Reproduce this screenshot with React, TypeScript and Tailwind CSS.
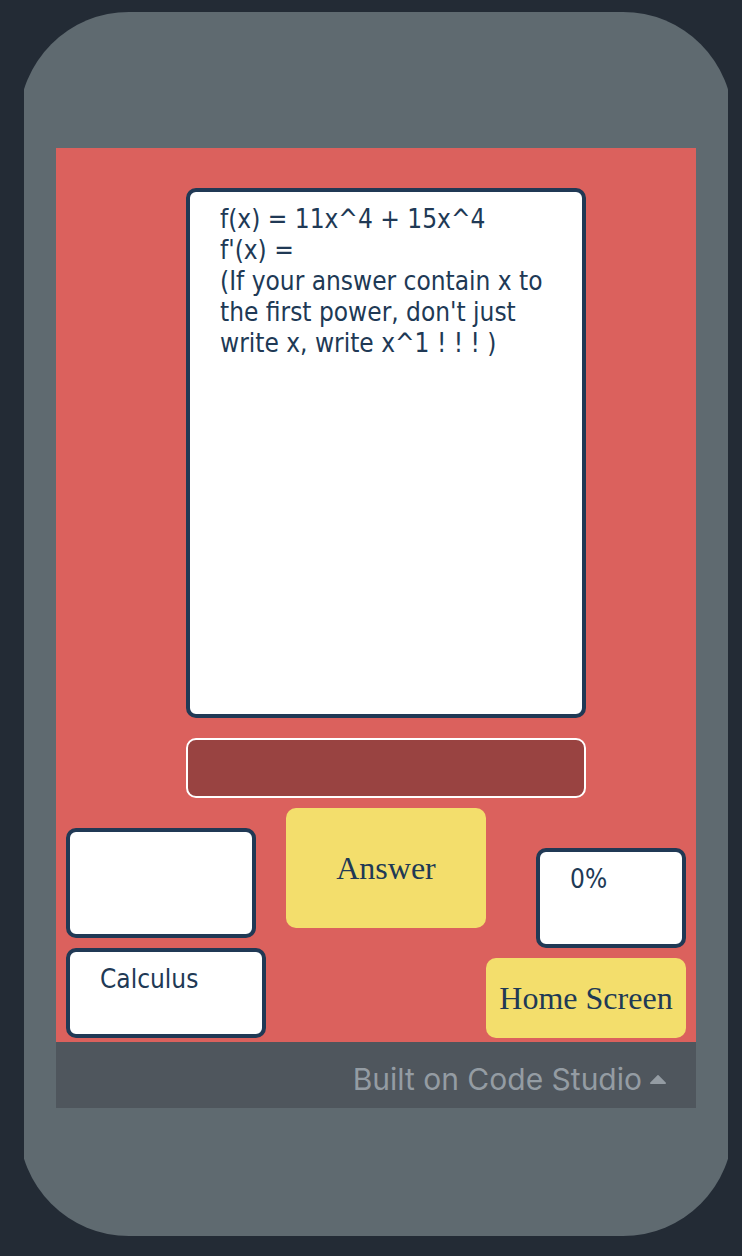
import { useState, type ReactNode } from "react";

function Panel({ className, children }: { className: string; children?: ReactNode }) {
  return (
    <div
      className={`rounded-[10px] border-4 border-[#203955] bg-white px-[30px] py-3 font-['DejaVu_Sans_Condensed','DejaVu_Sans',sans-serif] text-[26px] leading-[31px] text-[#203955] ${className}`}
    >
      {children}
    </div>
  );
}

function GameButton({ className, children }: { className: string; children: ReactNode }) {
  return (
    <button
      type="button"
      className={`w-full rounded-[10px] bg-[#f3de6c] font-['Liberation_Serif',serif] text-[32px] leading-9 whitespace-nowrap text-[#203955] ${className}`}
    >
      {children}
    </button>
  );
}

export default function App() {
  const [answer, setAnswer] = useState("");

  return (
    <div className="min-h-screen bg-[#232b35] pt-3 pr-[14px] pb-5 pl-6">
      <main className="mx-auto max-w-[704px] overflow-hidden">
        <div className="-mx-[5px] rounded-[110px] bg-[#5f6a70] px-[37px] pt-[136px] pb-32">
          <section className="bg-[#db615d] pt-10 pb-1">
            <Panel className="mr-[110px] ml-[130px] min-h-[530px]">
              <p>f(x) = 11x^4 + 15x^4</p>
              <p>f&apos;(x) =</p>
              <p>(If your answer contain x to the first power, don&apos;t just write x, write x^1 ! ! ! )</p>
            </Panel>
            <div className="mt-5 mr-[110px] ml-[130px]">
              <input
                type="text"
                aria-label="Your answer"
                value={answer}
                onChange={(event) => setAnswer(event.target.value)}
                className="block h-[60px] w-full rounded-[10px] border-2 border-white bg-[#994341] px-4 text-[26px] text-white outline-none"
              />
            </div>
            <div className="flex items-start px-[10px]">
              <div className="mr-auto flex w-[200px] flex-col gap-[10px] pt-[30px]">
                <Panel className="h-[110px] w-[190px]" />
                <Panel className="h-[90px]">Calculus</Panel>
              </div>
              <div className="w-[200px] pt-[10px]">
                <GameButton className="h-[120px]">Answer</GameButton>
              </div>
              <div className="flex w-[200px] flex-col items-end gap-[10px] pt-[50px]">
                <Panel className="h-[100px] w-[150px]">0%</Panel>
                <GameButton className="h-20">Home Screen</GameButton>
              </div>
            </div>
          </section>
          <footer className="flex h-[66px] items-center justify-end bg-[#4f565d] pt-2 pr-[30px]">
            <button
              type="button"
              className="flex items-center gap-2 font-['Inter',sans-serif] text-[30px] leading-9 text-[#949ca3]"
            >
              Built on Code Studio
              <svg viewBox="0 0 16 9" className="h-[9px] w-4" fill="currentColor" aria-hidden="true">
                <path d="M7.2.4a1.1 1.1 0 0 1 1.6 0l6.9 7.2c.6.6.2 1.4-.6 1.4H.9c-.8 0-1.2-.8-.6-1.4z" />
              </svg>
            </button>
          </footer>
        </div>
      </main>
    </div>
  );
}
